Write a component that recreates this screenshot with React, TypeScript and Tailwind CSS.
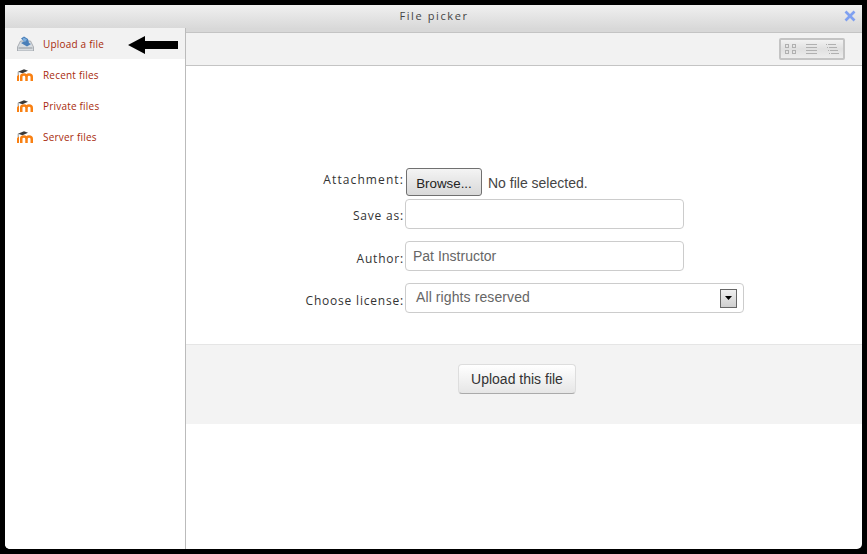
import React from 'react';
import { X } from 'lucide-react';

const labelFont = "font-['Open_Sans','DejaVu_Sans',sans-serif]";

function MoodleIcon() {
    return (
        <svg width="16" height="12" viewBox="0 0 16 12" className="shrink-0">
            <path d="M0 12V8C0 6.700.6 6 2 5.800V12z" fill="#f98012" />
            <path d="M4.250 12V7.500Q4.250 5.600 7 5.600 9.500 5.600 9.500 8V12M9.500 8Q9.500 5.600 12 5.600 14.750 5.600 14.750 8V12" fill="none" stroke="#f98012" strokeWidth="2.500" />
            <path d="M1 2.800 7 .3 11 1.800 5.500 4.200z" fill="#3a3a3a" />
            <path d="M1.200 2.800v3.200" stroke="#666" strokeWidth="0.7" fill="none" />
        </svg>
    );
}

function UploadIcon() {
    return (
        <svg width="17" height="15" viewBox="0 0 17 15" className="shrink-0">
            <path d="M3.500 5h10l3 6v4H.5v-4z" fill="#d8dce0" stroke="#9aa0a6" strokeWidth="0.8" />
            <path d="M1.500 11h14v2h-14z" fill="#b4b9be" />
            <path d="M4 7l6 3.500 4-2.500-2-1-1-4-4-2.500-3 2 3 3z" fill="#4a7fb8" />
            <path d="M6.500 1.500 10 3.500 8 6 5.500 4z" fill="#7fb0de" />
        </svg>
    );
}

function SideItem({ label, active, children }: { label: string; active?: boolean; children: React.ReactNode }) {
    return (
        <div className={`flex h-[31px] items-center pl-[12px] ${active ? 'bg-[#f2f2f2]' : ''}`}>
            <div className="flex w-[26px] justify-start">{children}</div>
            <span className={`${labelFont} pt-[2px] text-[10px] tracking-[0.2px] text-[#a82a0c]`}>{label}</span>
        </div>
    );
}

function FormRow({ label, labelClass, className, children }: { label: string; labelClass?: string; className?: string; children: React.ReactNode }) {
    return (
        <div className={`flex items-center ${className ?? ''}`}>
            <label className={`${labelFont} w-[218px] text-right text-[12px] tracking-[0.8px] text-[#333] ${labelClass ?? ''}`}>{label}</label>
            <div className="ml-px">{children}</div>
        </div>
    );
}

export default function App() {
    return (
        <div className="h-[554px] w-[867px] overflow-hidden bg-black p-[5px]">
            <div className="flex h-[544px] w-[857px] flex-col overflow-hidden rounded-bl-[5px] rounded-br-[5px] bg-white">
                {/* Title bar */}
                <div className="relative flex h-[23px] shrink-0 items-center justify-center bg-gradient-to-b from-[#f0f0f0] to-[#d9d9d9]">
                    <span className={`${labelFont} ml-px text-[11px] font-medium tracking-[1.600px] text-[#444]`}>File picker</span>
                    <X className="absolute right-[3px] top-[2px] h-[18px] w-[18px] text-[#7fa0f0]" strokeWidth={3.5} strokeLinecap="butt" />
                </div>

                <div className="flex min-h-0 flex-1">
                    {/* Sidebar */}
                    <div className="w-[181px] shrink-0 border-r border-[#bbb] bg-white">
                        <SideItem label="Upload a file" active><UploadIcon /></SideItem>
                        <SideItem label="Recent files"><MoodleIcon /></SideItem>
                        <SideItem label="Private files"><MoodleIcon /></SideItem>
                        <SideItem label="Server files"><MoodleIcon /></SideItem>
                    </div>

                    {/* Main */}
                    <div className="flex min-w-0 flex-1 flex-col">
                        <div className="h-[5px] shrink-0 border-b border-[#c4c4c4] bg-[#d8d8d8]" />
                        <div className="flex h-[33px] shrink-0 items-center justify-end border-b border-[#c4c4c4] bg-[#f2f2f2] pr-[17px]">
                            <div className="flex h-[22px] w-[66px] items-center rounded-[2px] border-2 border-[#c4c4c4] bg-gradient-to-b from-[#f2f2f2] via-[#e0e0e0] to-[#ededed] pl-[4px]">
                                <svg width="11" height="10" viewBox="0 0 11 10" fill="none" stroke="#b0b0b0" className="shrink-0">
                                    <rect x="0.500" y="0.500" width="3" height="3" />
                                    <rect x="7.500" y="0.500" width="3" height="3" />
                                    <rect x="0.500" y="6.500" width="3" height="3" />
                                    <rect x="7.500" y="6.500" width="3" height="3" />
                                </svg>
                                <svg width="11" height="10" viewBox="0 0 11 10" stroke="#b0b0b0" className="ml-[10px] shrink-0">
                                    <path d="M0 .5h11M0 3.500h11M0 6.500h11M0 9.500h11" />
                                </svg>
                                <svg width="13" height="10" viewBox="0 0 13 10" stroke="#b0b0b0" className="ml-[9px] shrink-0">
                                    <path d="M0 .5h1M2 .5h8M1 3.500h1M3 3.500h8M2 6.500h1M4 6.500h8M3 9.500h1M5 9.500h8" />
                                </svg>
                            </div>
                        </div>

                        {/* Upload form */}
                        <div className="h-[278px] shrink-0 pt-[102px]">
                            <FormRow label="Attachment:" labelClass="pb-[4px] tracking-[1.100px]" className="h-[28px]">
                                <div className="flex items-center">
                                    <button className="ml-px h-[28px] w-[76px] rounded-[3px] border border-[#707070] bg-gradient-to-b from-[#f4f4f4] to-[#d9d9d9] pt-[3px] font-['Liberation_Sans',sans-serif] text-[13.330px] text-[#222]">
                                        Browse...
                                    </button>
                                    <span className="ml-[6px] pt-[3px] font-['Liberation_Sans',sans-serif] text-[14px] text-[#444]">No file selected.</span>
                                </div>
                            </FormRow>
                            <FormRow label="Save as:" labelClass="pt-[4px]" className="mt-[3px] h-[30px]">
                                <div className="h-[30px] w-[279px] rounded-[4px] border border-[#ccc] bg-white" />
                            </FormRow>
                            <FormRow label="Author:" labelClass="pt-[6px]" className="mt-[12px] h-[30px]">
                                <div className="flex h-[30px] w-[279px] items-center rounded-[4px] border border-[#ccc] bg-white pl-[7px] font-['Liberation_Sans',sans-serif] text-[14px] text-[#666]">
                                    Pat Instructor
                                </div>
                            </FormRow>
                            <FormRow label="Choose license:" labelClass="pt-[6px]" className="mt-[12px] h-[30px]">
                                <div className="flex h-[30px] w-[339px] items-center justify-between rounded-[4px] border border-[#ccc] bg-white pl-[10px] pr-[6px] font-['Liberation_Sans',sans-serif] text-[14px] tracking-[0.1px] text-[#666]">
                                    <span className="pb-px">All rights reserved</span>
                                    <span className="flex h-[19px] w-[17px] items-center justify-center border border-[#666] bg-gradient-to-b from-[#f0f0f0] to-[#cfcfcf]">
                                        <svg width="7" height="4" viewBox="0 0 7 4"><path d="M0 0h7L3.500 4z" fill="#000" /></svg>
                                    </span>
                                </div>
                            </FormRow>
                        </div>

                        {/* Footer */}
                        <div className="flex h-[80px] shrink-0 justify-center border-t border-[#e5e5e5] bg-[#f3f3f3] pt-[19px]">
                            <button className="mr-[14px] h-[30px] w-[118px] rounded-[4px] border border-[#ddd] border-b-[#aaa] bg-gradient-to-b from-[#ffffff] to-[#e6e6e6] font-['Liberation_Sans',sans-serif] text-[14px] text-[#333]">
                                Upload this file
                            </button>
                        </div>
                    </div>
                </div>
            </div>
            {/* Annotation arrow */}
            <svg width="50" height="18" viewBox="0 0 50 18" className="absolute left-[128px] top-[36px]">
                <path d="M0 9 17 0v5h33v8H17v5z" fill="#000" />
            </svg>
        </div>
    );
}
